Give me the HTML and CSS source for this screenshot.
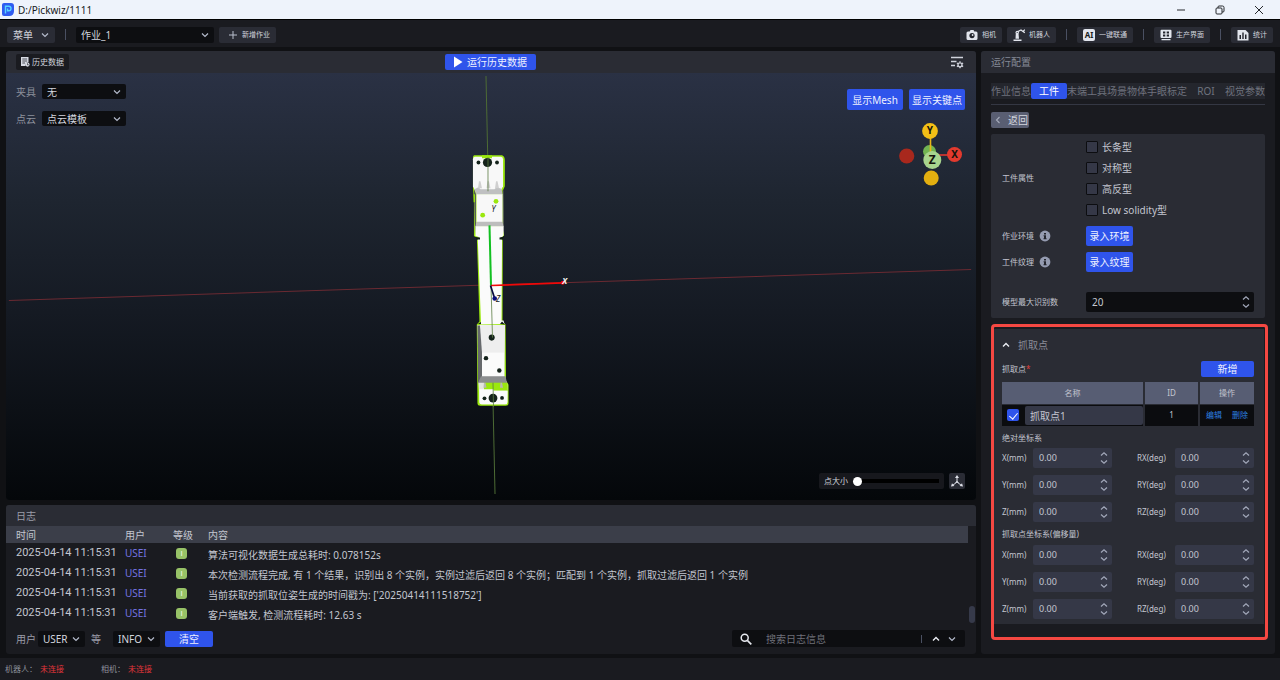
FILE: index.html
```html
<!DOCTYPE html>
<html lang="zh-CN">
<head>
<meta charset="utf-8">
<title>D:/Pickwiz/1111</title>
<link rel="stylesheet" href="styles.css">
</head>
<body>
<svg class="sprite" aria-hidden="true">
  <symbol id="down" viewBox="0 0 8 8"><path d="M1 2.5 4 5.5 7 2.5" fill="none" stroke="currentColor" stroke-width="1.2"/></symbol>
  <symbol id="up" viewBox="0 0 8 8"><path d="M1 5.5 4 2.5 7 5.5" fill="none" stroke="currentColor" stroke-width="1.4"/></symbol>
  <symbol id="spin" viewBox="0 0 8 14"><path d="M1 4.5 4 1.7 7 4.5M1 9.5 4 12.3 7 9.5" fill="none" stroke="currentColor" stroke-width="1.2"/></symbol>
  <symbol id="info" viewBox="0 0 12 12"><circle cx="6" cy="6" r="5.4" fill="#949bb0"/><path d="M5 3h2v1.4H5zM4.6 5.2H7v3h.6v1H4.5v-1H5v-2h-.4z" fill="#24262e"/></symbol>
</svg>

<header class="titlebar">
  <svg class="logo" viewBox="0 0 12 13"><path d="M2 0h7q3 0 3 3v5q0 5-5 5H2q-2 0-2-2V2q0-2 2-2z" fill="#2f5bf0"/><path d="M3.500 10.500V3.200h3.200a2.200 2.200 0 0 1 0 4.600H5.600V5.400" fill="none" stroke="#58d4ff" stroke-width="1.400"/></svg>
  <h1 class="title">D:/Pickwiz/1111</h1>
  <div class="window-buttons">
    <button aria-label="最小化"><svg viewBox="0 0 10 10"><path d="M1 5h8" /></svg></button>
    <button aria-label="还原"><svg viewBox="0 0 10 10"><rect x="1" y="3" width="6" height="6" rx="1"/><path d="M3 3V2q0-1 1-1h3.500q1.500 0 1.500 1.500V6q0 1-1 1H7"/></svg></button>
    <button aria-label="关闭"><svg viewBox="0 0 10 10"><path d="m1 1 8 8M9 1 1 9"/></svg></button>
  </div>
</header>

<nav class="toolbar">
  <button class="chip menu">菜单<svg class="chev"><use href="#down"/></svg></button>
  <i class="sep"></i>
  <span class="select job"><select aria-label="作业"><option>作业_1</option></select><svg class="chev"><use href="#down"/></svg></span>
  <button class="chip add"><svg class="ico10" viewBox="0 0 10 10"><path d="M5 1v8M1 5h8" stroke="#b9bfce" stroke-width="1" fill="none"/></svg>新增作业</button>
  <span class="grow"></span>
  <button class="chip"><svg class="ico" viewBox="0 0 12 12"><path d="M2 2.500h1.700L4.500 1h3l.8 1.500H10q1.500 0 1.500 1.500v5.500Q11.500 11 10 11H2Q.5 11 .5 9.500V4Q.5 2.500 2 2.500z" fill="#e2e5ed"/><circle cx="6" cy="6.600" r="2.600" fill="#22242c"/><circle cx="6.600" cy="6" r=".9" fill="#e2e5ed"/></svg>相机</button>
  <button class="chip"><svg class="ico" viewBox="0 0 12 12"><path d="M.5 10.500h8V12h-8zM2.500 9.800l.3-5.500h2.700l.5 5.500z" fill="#e2e5ed"/><circle cx="4.200" cy="3.500" r="1.700" fill="#e2e5ed"/><path d="m4 3 4-2 2 1.500M10 2.500 11.800.6M10 2.500l1.800 1.200" stroke="#e2e5ed" stroke-width="1.200" fill="none"/><circle cx="4.200" cy="3.500" r=".6" fill="#22242c"/></svg>机器人</button>
  <i class="sep"></i>
  <button class="chip"><span class="ai">AI</span>一键联通</button>
  <i class="sep"></i>
  <button class="chip"><svg class="ico" viewBox="0 0 12 12"><path d="M1.500.8h9q1 0 1 1V8q0 1-1 1h-9q-1 0-1-1V1.800q0-1 1-1zM1.500 10h9v1.200h-9z" fill="#e2e5ed"/><path d="M3 2.500h2.300v1.900H3zM6.700 2.500H9v1.900H6.700zM3 5.600h2.300v1.900H3zM6.700 5.600H9v1.900H6.700z" fill="#22242c"/></svg>生产界面</button>
  <i class="sep"></i>
  <button class="chip"><svg class="ico" viewBox="0 0 12 12"><path d="M1 1h7.500L11.500 4v7.500h-11V1.500z" fill="#e2e5ed"/><path d="M2.500 6H4v4H2.500zM5.300 3.500h1.400V10H5.300zM8 5.500h1.500V10H8z" fill="#22242c"/></svg>统计</button>
</nav>

<main class="workspace">
  <div class="left">
    <section class="panel viewer">
      <div class="viewer-head">
        <button class="history"><svg class="ico10" viewBox="0 0 10 10"><path d="M1 0h7.500v5.200L6 6 5.500 9H1z" fill="#d8dbe4"/><path d="M2.300 2h4.800M2.300 4h4.800M2.300 6H5" stroke="#2a2c34" stroke-width=".8"/><circle cx="7.500" cy="7.600" r="2.100" fill="#d8dbe4"/><path d="M7.500 6.300v1.500h1.200" stroke="#1a1b20" stroke-width=".7" fill="none"/></svg>历史数据</button>
        <button class="primary run"><svg class="play" viewBox="0 0 10 12"><path d="M1 .5 9.500 6 1 11.500z" fill="#fff"/></svg>运行历史数据</button>
        <button class="bare options" aria-label="显示设置"><svg viewBox="0 0 13 13"><path d="M0 1.500h12M0 5.500h5.500M0 9.500h4" stroke="#d0d3dc" stroke-width="1.300"/><circle cx="9" cy="8.800" r="2" fill="none" stroke="#d0d3dc" stroke-width="1.300"/><path d="M9 5.300v1.300M9 11v1.300M5.900 7l1.200.7M10.900 9.900l1.200.7M5.900 10.600l1.200-.7M10.900 7.700l1.200-.7" stroke="#d0d3dc" stroke-width="1.300"/></svg></button>
      </div>
      <div class="scene">
        <svg class="model" viewBox="6 73 970 426" preserveAspectRatio="xMidYMid slice" role="img" aria-label="点云">
          <path d="M10 300 970 269" stroke="#6b2a32" stroke-width="1"/>
          <path d="M486 76 495 493" stroke="#4d6b35" stroke-width="1"/>
          <path d="M474.500 155H502Q504.800 156 504.800 160V186L503 190 504 235 501.500 237.500 502.700 240 502.500 321 505.500 324 506 380 508.500 384V402.500Q508.500 405 505.500 405H480.500Q477.500 405 477.500 402.500L476.800 324 479.500 321 477 240 478 238 474 235.500V203L473 186V158Q473 155 474.500 155z" fill="#9be80e"/>
          <path d="M475 156.500h26q2 0 2 2.500v27l-3 6h-24l-3-6v-27q0-2.500 2-2.500z" fill="#f8f8f8"/>
          <path d="M482 155h10v3h-10z" fill="#9be80e"/>
          <path d="M474 189 476 194v32l-1 8z" fill="#53565b"/>
          <path d="M473.700 194h1.300v8h-1.300z" fill="#9be80e"/>
          <path d="M502.500 190l1 0 .5 44-1.500-6z" fill="#53565b"/>
          <path d="M474.500 189q2-1 4-2l2 2h14l2-2 5 1.500 1 6h-26z" fill="#bfc0c1"/>
          <path d="M479 181h1.500l1.500 7h-4zM487.500 181h1.500l1.500 7h-4zM496 181h1.500l1.500 7h-4z" fill="#d0d0d0"/>
          <path d="M476.500 194h26v28h-26z" fill="#f8f8f8"/>
          <path d="M476.500 221.500h26l1 5h-28z" fill="#bdbdbd"/>
          <path d="M475.500 226h28v9l-2.500 2.500 1 2.500-.5 80h2l1 3.500-24 .5.500-3-3.200-82 1-2.500-3.300-1z" fill="#fbfbfb"/>
          <path d="m475 236.500 5 .5v2h-3zM504.500 236l-5 1v2h3zM481 321.500v2h-3zM502 321l3 3-5-.5z" fill="#101e15"/>
          <path d="M477.500 324.500h27.500l-.5 52 3 7-.5 20h-26q-1.500 0-1.500-2z" fill="#eeeeee"/>
          <path d="m477.500 325 2.500 0 2 27v24l-4 7z" fill="#66696c"/>
          <path d="M482 352h22v24h-22z" fill="#fbfbfb"/>
          <path d="M481 375.500h24.500l1.500 7h-29z" fill="#8b8d8e"/>
          <path d="M478.500 382h5.500l1 8h-6z" fill="#e4e6df"/>
          <path d="M484 382h23.500v8H484z" fill="#9be80e"/>
          <path d="M479.500 388.500h14v1.500h14v11q0 2.500-2.500 2.500h-23q-2.500 0-2.500-2.500z" fill="#fbfbfb"/>
          <path d="M484 382l1.500 0 1 5h-3zM500.500 382h1.500l1 5h-3z" fill="#b8b8b0"/>
          <g fill="#14221a"><circle cx="487.500" cy="162.300" r="4.600"/><circle cx="478.500" cy="162.300" r="1.900"/><circle cx="497" cy="162.300" r="1.900"/><circle cx="491.700" cy="337" r="3"/><circle cx="486" cy="357.500" r="2.200"/><circle cx="499.300" cy="369.800" r="2.200"/><circle cx="493" cy="397.300" r="4.400"/><circle cx="484.500" cy="397.600" r="1.900"/><circle cx="502" cy="397.200" r="1.900"/></g>
          <circle cx="496" cy="201" r="2.400" fill="#9be80e"/><circle cx="482.700" cy="214.800" r="2.400" fill="#9be80e"/>
          <path d="M488 157v34M491 285l1.500 52M493 382l.5 24" stroke="#5d7d45" stroke-width=".8" fill="none"/>
          <path d="M489.500 225 491 285" stroke="#13c022" stroke-width="2"/>
          <path d="M491 285 563 282.300" stroke="#f00808" stroke-width="1.700"/><circle cx="562.500" cy="282.300" r="2" fill="#f00808"/>
          <path d="m490.500 285 4 12.500" stroke="#090b3c" stroke-width="1.700"/><circle cx="494.700" cy="298" r="2.300" fill="#090c78"/>
          <text class="axis" x="491.500" y="212">Y</text><text class="axis" x="496" y="301">Z</text><text class="axis light" x="562" y="284">X</text>
        </svg>
        <div class="overlay">
          <div class="pickers">
            <label class="picker">夹具<span class="select"><select><option>无</option></select><svg class="chev"><use href="#down"/></svg></span></label>
            <label class="picker">点云<span class="select"><select><option>点云模板</option></select><svg class="chev"><use href="#down"/></svg></span></label>
          </div>
          <div class="display">
            <div class="display-buttons"><button class="primary tall">显示Mesh</button><button class="primary tall">显示关键点</button></div>
            <svg class="gizmo" viewBox="899 122 66 66" role="img" aria-label="坐标轴">
              <circle cx="906.700" cy="156" r="7.600" fill="#a8281d"/><circle cx="929.500" cy="151.500" r="6.500" fill="#72b552"/>
              <path d="M930.500 131v25" stroke="#e8b516" stroke-width="1.600"/><path d="M932 155h20" stroke="#b83431" stroke-width="1.800"/>
              <circle cx="930" cy="131" r="7.900" fill="#f3bf16"/><circle cx="954.500" cy="154.500" r="7.500" fill="#e23a2e"/><circle cx="931.200" cy="178" r="7.500" fill="#e3af10"/><circle cx="932.300" cy="160" r="9" fill="#a8d58e"/>
              <text x="930" y="134">Y</text><text x="954.500" y="158">X</text><text class="z" x="932.300" y="164">Z</text>
            </svg>
          </div>
        </div>
        <div class="overlay bottom">
          <label class="size">点大小<input type="range" min="0" max="100" value="0"></label>
          <button class="chip axes" aria-label="坐标轴"><svg class="ico" viewBox="0 0 12 12"><path d="M6 2v5L1.500 10.500M6 7l4.500 3.500M4.500 7.500 6 6.500l1.500 1" stroke="#dfe2ea" fill="none" stroke-width="1"/><path d="M6 0 8 3H4zM0 11.500l1-3.300 2.400 2.800zM12 11.500l-1-3.300L8.600 11z" fill="#dfe2ea"/></svg></button>
        </div>
      </div>
    </section>

    <section class="panel log">
      <h2 class="panel-head">日志</h2>
      <div class="log-scroll">
        <table class="log-table">
          <thead><tr><th class="time">时间</th><th class="user">用户</th><th class="level">等级</th><th>内容</th></tr></thead>
          <tbody>
            <tr><td>2025-04-14 11:15:31</td><td class="user">USEI</td><td><span class="badge">I</span></td><td class="message">算法可视化数据生成总耗时: 0.078152s</td></tr>
            <tr><td>2025-04-14 11:15:31</td><td class="user">USEI</td><td><span class="badge">I</span></td><td class="message">本次检测流程完成, 有 1 个结果，识别出 8 个实例，实例过滤后返回 8 个实例；匹配到 1 个实例，抓取过滤后返回 1 个实例</td></tr>
            <tr><td>2025-04-14 11:15:31</td><td class="user">USEI</td><td><span class="badge">I</span></td><td class="message">当前获取的抓取位姿生成的时间戳为: ['20250414111518752']</td></tr>
            <tr><td>2025-04-14 11:15:31</td><td class="user">USEI</td><td><span class="badge">I</span></td><td class="message">客户端触发, 检测流程耗时: 12.63 s</td></tr>
          </tbody>
        </table>
        <span class="thumb"></span>
      </div>
      <div class="log-filter">
        <label class="who" for="log-user">用户</label>
        <span class="select short"><select id="log-user"><option>USER</option></select><svg class="chev"><use href="#down"/></svg></span>
        <label class="lvl" for="log-level">等</label>
        <span class="select short"><select id="log-level"><option>INFO</option></select><svg class="chev"><use href="#down"/></svg></span>
        <button class="primary clear">清空</button>
        <span class="grow"></span>
        <div class="search">
          <svg class="ico" viewBox="0 0 12 12"><circle cx="4.700" cy="4.700" r="3.500" fill="none" stroke="#e6e8ee" stroke-width="1.500"/><path d="m7.300 7.300 4 4" stroke="#e6e8ee" stroke-width="1.700"/></svg>
          <input type="text" placeholder="搜索日志信息" aria-label="搜索日志信息">
          <i class="sep small"></i>
          <button class="bare bright" aria-label="上一个"><svg class="chev"><use href="#up"/></svg></button>
          <button class="bare" aria-label="下一个"><svg class="chev"><use href="#down"/></svg></button>
        </div>
      </div>
    </section>
  </div>

  <aside class="panel config">
    <h2 class="panel-head">运行配置</h2>
    <div class="config-body">
      <div class="tabs">
        <button>作业信息</button><button class="active">工件</button><button>末端工具</button><button>场景物体</button><button>手眼标定</button><button class="roi">ROI</button><button>视觉参数</button>
      </div>
      <button class="back"><svg class="ico8" viewBox="0 0 8 8"><path d="M5.500 1 2.500 4l3 3" fill="none" stroke="#a5abbb" stroke-width="1.100"/></svg>返回</button>
      <section class="card props">
        <span>工件属性</span>
        <div class="checks">
          <label><input type="checkbox">长条型</label>
          <label><input type="checkbox">对称型</label>
          <label><input type="checkbox">高反型</label>
          <label><input type="checkbox">Low solidity型</label>
        </div>
        <span class="with-info">作业环境<svg class="ico"><use href="#info"/></svg></span>
        <button class="primary enter">录入环境</button>
        <span class="with-info">工件纹理<svg class="ico"><use href="#info"/></svg></span>
        <button class="primary enter">录入纹理</button>
        <label class="max" for="max">模型最大识别数</label>
        <span class="number dark max"><input id="max" type="number" value="20"><svg><use href="#spin"/></svg></span>
      </section>

      <section class="grasp">
        <div class="grasp-body">
          <h3 class="grasp-title"><svg class="chev"><use href="#up"/></svg>抓取点</h3>
          <div class="grasp-add"><span>抓取点<b>*</b></span><button class="primary">新增</button></div>
          <table class="points">
            <thead><tr><th>名称</th><th class="c-id">ID</th><th class="c-op">操作</th></tr></thead>
            <tbody><tr>
              <td><div class="name"><input type="checkbox" checked aria-label="启用抓取点1"><input type="text" value="抓取点1" aria-label="名称"></div></td>
              <td>1</td>
              <td><div class="ops"><a href="#edit">编辑</a><a href="#delete">删除</a></div></td>
            </tr></tbody>
          </table>
          <h4>绝对坐标系</h4>
          <div class="coords">
            <label for="ax">X(mm)</label><span class="number"><input id="ax" type="number" step="0.01" value="0.00"><svg><use href="#spin"/></svg></span>
            <label class="rot" for="arx">RX(deg)</label><span class="number"><input id="arx" type="number" step="0.01" value="0.00"><svg><use href="#spin"/></svg></span>
            <label for="ay">Y(mm)</label><span class="number"><input id="ay" type="number" step="0.01" value="0.00"><svg><use href="#spin"/></svg></span>
            <label class="rot" for="ary">RY(deg)</label><span class="number"><input id="ary" type="number" step="0.01" value="0.00"><svg><use href="#spin"/></svg></span>
            <label for="az">Z(mm)</label><span class="number"><input id="az" type="number" step="0.01" value="0.00"><svg><use href="#spin"/></svg></span>
            <label class="rot" for="arz">RZ(deg)</label><span class="number"><input id="arz" type="number" step="0.01" value="0.00"><svg><use href="#spin"/></svg></span>
          </div>
          <h4>抓取点坐标系(偏移量)</h4>
          <div class="coords">
            <label for="ox">X(mm)</label><span class="number"><input id="ox" type="number" step="0.01" value="0.00"><svg><use href="#spin"/></svg></span>
            <label class="rot" for="orx">RX(deg)</label><span class="number"><input id="orx" type="number" step="0.01" value="0.00"><svg><use href="#spin"/></svg></span>
            <label for="oy">Y(mm)</label><span class="number"><input id="oy" type="number" step="0.01" value="0.00"><svg><use href="#spin"/></svg></span>
            <label class="rot" for="ory">RY(deg)</label><span class="number"><input id="ory" type="number" step="0.01" value="0.00"><svg><use href="#spin"/></svg></span>
            <label for="oz">Z(mm)</label><span class="number"><input id="oz" type="number" step="0.01" value="0.00"><svg><use href="#spin"/></svg></span>
            <label class="rot" for="orz">RZ(deg)</label><span class="number"><input id="orz" type="number" step="0.01" value="0.00"><svg><use href="#spin"/></svg></span>
          </div>
        </div>
      </section>
    </div>
  </aside>
</main>

<footer class="status">
  <span>机器人：<b>未连接</b></span>
  <span>相机：<b>未连接</b></span>
</footer>
</body>
</html>
```
FILE: styles.css
```css
* { box-sizing: border-box; }
html, body { height: 100%; margin: 0; }
body {
  display: flex;
  flex-direction: column;
  background: #101114;
  color: #c3c6d0;
  font: 10px/16px "Noto Sans", "Noto Sans CJK SC", sans-serif;
  overflow: hidden;
}
button, input, select { font: inherit; color: inherit; margin: 0; padding: 0; border: 0; background: none; }
button, label, th { white-space: nowrap; }
h1, h2, h3, h4 { margin: 0; font-size: 10px; font-weight: 400; }
svg { flex: none; display: block; }
b { font-weight: 400; }
.sprite { position: absolute; width: 0; height: 0; }
.grow { flex: 1; }
.chev, .ico8 { width: 8px; height: 8px; color: #b4bacb; }
.ico { width: 12px; height: 12px; }
.ico10 { width: 10px; height: 10px; }

.titlebar { display: flex; align-items: center; flex: none; height: 20px; padding: 0 16px 0 2px; background: #eef3fb; border-bottom: 1px solid #000; color: #16181c; }
.logo { width: 12px; height: 13px; margin-right: 4px; }
.title { flex: 1; }
.window-buttons { display: flex; gap: 29px; }
.window-buttons button { width: 10px; height: 10px; }
.window-buttons svg { width: 10px; height: 10px; fill: none; stroke: #26282c; stroke-width: 1; }

.toolbar { display: flex; align-items: center; gap: 5px; flex: none; height: 27px; padding: 2px 7px 0; background: #1a1b20; }
.chip { display: flex; align-items: center; gap: 4px; height: 16px; padding: 0 6px; border-radius: 2px; background: #2a2c35; font-size: 7px; color: #d0d3dc; }
.menu { font-size: 10px; gap: 8px; }
.add { padding: 0 6px 0 9px; }
.sep { width: 1px; height: 11px; margin: 0 5px; background: #4a5062; }
.job { width: 138px; }
.ai { width: 12px; height: 12px; border-radius: 2px; background: #e2e5ed; color: #1a1b20; font-size: 8px; font-weight: 700; line-height: 12px; text-align: center; }

.select { position: relative; display: block; height: 15px; border-radius: 2px; background: #0d0e11; color: #d3d6df; }
.toolbar .select { height: 16px; }
.select select { display: block; appearance: none; width: 100%; height: 100%; padding: 0 16px 0 5px; outline: 0; }
.select .chev { position: absolute; right: 5px; top: 4px; pointer-events: none; }

.workspace { display: grid; grid-template-columns: minmax(0, 1fr) 294px; gap: 5px; flex: 1; min-height: 0; padding: 4px 5px 4px 6px; }
.left { display: flex; flex-direction: column; gap: 5px; min-height: 0; }
.panel { border-radius: 3px; background: #1a1b20; overflow: hidden; }
.panel-head { height: 22px; padding: 0 10px; line-height: 22px; background: #2a2c34; color: #9a9da8; }

.viewer { flex: 1; display: flex; flex-direction: column; min-height: 0; }
.viewer-head { display: grid; grid-template-columns: 1fr auto 1fr; align-items: center; height: 22px; padding: 0 12px 0 10px; background: #2a2c34; }
.history { display: flex; align-items: center; justify-self: start; gap: 2px; height: 16px; padding: 0 5px 0 4px; border-radius: 2px; background: #1a1b20; color: #d0d3dc; font-size: 8px; }
.primary { display: flex; align-items: center; justify-content: center; height: 16px; border-radius: 2px; background: #2f54eb; color: #eef1ff; }
.run { width: 91px; gap: 4px; }
.play { width: 10px; height: 12px; }
.options { justify-self: end; }
.options svg { width: 13px; height: 13px; }
.bare { display: flex; align-items: center; }
.bright .chev { color: #eceef4; }

.scene { position: relative; flex: 1; display: flex; flex-direction: column; justify-content: space-between; min-height: 0; background: linear-gradient(#2a3144, #1e2530 30%, #151a23 56%, #04070a); }
.model { position: absolute; inset: 0; width: 100%; height: 100%; }
.axis { font: italic 8px "Noto Sans", sans-serif; fill: #15171c; }
.axis.light { fill: #f4f4f4; font-weight: 700; }
.overlay { position: relative; display: flex; justify-content: space-between; padding: 11px 11px 0 10px; }
.pickers { display: flex; flex-direction: column; gap: 12px; }
.picker { display: flex; align-items: center; gap: 6px; height: 15px; color: #8d919c; }
.picker .select { width: 84px; }
.display { display: flex; flex-direction: column; align-items: flex-end; gap: 12px; padding-top: 5px; }
.display-buttons { display: flex; gap: 6px; }
.tall { width: 56px; height: 21px; }
.gizmo { width: 66px; height: 66px; }
.gizmo text { font: 700 10px "Noto Sans", sans-serif; fill: #16140c; text-anchor: middle; }
.gizmo .z { font-size: 12px; }
.bottom { justify-content: flex-end; gap: 5px; padding: 0 11px 11px; }
.size { display: flex; align-items: center; gap: 5px; width: 125px; height: 16px; padding: 0 5px; border-radius: 2px; background: #17181d; font-size: 8px; color: #d0d3dc; }
.size input { appearance: none; flex: 1; min-width: 0; height: 10px; outline: 0; background: linear-gradient(#000, #000) center / 100% 4px no-repeat; }
.size input::-webkit-slider-thumb { appearance: none; width: 9px; height: 9px; border-radius: 50%; background: #fff; }
.axes { padding: 0 2px; }

.log { flex: none; }
.log .panel-head { height: 21px; }
.log-scroll { position: relative; padding-right: 8px; }
.thumb { position: absolute; right: 1px; bottom: 0; width: 6px; height: 17px; border-radius: 3px; background: #363a4a; }
.log-table { width: 100%; table-layout: fixed; border-collapse: collapse; color: #c3c6d0; }
.log-table th { height: 17px; padding: 0; background: #3b3e49; font-weight: 400; line-height: 16px; text-align: left; }
.log-table td { height: 20px; padding: 0; line-height: 16px; vertical-align: middle; white-space: nowrap; }
.log-table .time { width: 119px; padding-left: 10px; }
.log-table td:first-child { padding-left: 10px; font-family: Roboto, sans-serif; font-size: 11px; }
.log-table th.user { width: 48px; }
.log-table td.user { color: #7473e0; }
.log-table .level { width: 35px; }
.log-table td.message { padding-top: 4px; }
.badge { display: block; width: 11px; height: 11px; margin-left: 3px; border-radius: 3px; background: #97c267; color: #f3f8ec; font-family: "Liberation Sans", sans-serif; font-size: 8px; line-height: 11px; text-align: center; }
.log-filter { display: flex; align-items: center; height: 31px; padding: 0 11px 0 10px; }
.who { width: 20px; margin-right: 2px; color: #9a9da8; }
.lvl { width: 10px; margin: 0 12px 0 6px; color: #9a9da8; }
.log-filter .select { height: 16px; }
.short { width: 47px; }
.short select { padding-right: 12px; }
.clear { width: 48px; margin-left: 5px; }
.search { display: flex; align-items: center; gap: 8px; width: 233px; height: 17px; padding: 0 9px 0 8px; border-radius: 2px; background: #0d0e11; }
.search input { flex: 1; min-width: 0; padding-left: 6px; outline: 0; }
.search input::placeholder { color: #6d7079; opacity: 1; }
.small { height: 8px; margin: 0 2px 0 0; }

.config { display: flex; flex-direction: column; }
.config .panel-head { flex: none; color: #858996; }
.config-body { display: flex; flex-direction: column; align-items: stretch; padding: 10px 10px 0; }
.tabs { display: flex; justify-content: space-between; padding-bottom: 5px; border-bottom: 1px solid #343743; }
.tabs button { height: 16px; background: #24262d; color: #6f727d; }
.tabs .active { width: 36px; border-radius: 2px; background: #2f54eb; color: #fff; }
.tabs .roi { flex: 1; }
.back { display: flex; align-items: center; align-self: flex-start; gap: 6px; height: 16px; margin: 7px 0 6px; padding: 0 1px 0 3px; border-radius: 2px; background: #595e72; color: #d3d6df; }
.card { border-radius: 2px; background: #2a2c34; }
.props { display: grid; grid-template-columns: 84px 1fr; align-items: center; row-gap: 6px; padding: 2px 11px 6px; font-size: 8px; }
.checks { display: grid; font-size: 10px; }
.checks label { display: flex; align-items: center; gap: 4px; height: 21px; }
input[type="checkbox"] { appearance: none; flex: none; width: 12px; height: 12px; border: 1px solid #0c0d10; border-radius: 1px; background: #353847; }
.with-info { display: flex; align-items: center; gap: 5px; }
.enter { width: 47px; height: 20px; font-size: 10px; }
.max { margin-top: 14px; }
.number { position: relative; display: block; height: 20px; border-radius: 2px; background: #353847; font-size: 9px; }
.number.dark { background: #0d0e11; font-size: 10px; }
.number input { display: block; appearance: textfield; width: 100%; height: 100%; padding: 0 16px 0 6px; outline: 0; }
.number input::-webkit-inner-spin-button { appearance: none; margin: 0; }
.number svg { position: absolute; right: 4px; top: 3px; width: 8px; height: 14px; color: #a2a8ba; pointer-events: none; }

.grasp { margin: 6px -3px 0 0; padding: 2px 1px 13px 0; border: 3px solid #f54842; border-radius: 4px; }
.grasp-body { padding: 8px 10px 5px 8px; background: #2a2c34; font-size: 8px; }
.grasp-title { display: flex; align-items: center; gap: 8px; height: 16px; color: #8a8d98; }
.grasp-title .chev { color: #eceef4; }
.grasp-add { display: flex; justify-content: space-between; align-items: center; margin: 8px 0 5px; }
.grasp-add b { color: #e0403c; }
.grasp-add .primary { width: 53px; font-size: 10px; }
.points { width: 100%; table-layout: fixed; border-collapse: collapse; text-align: center; }
.points th { height: 22px; padding: 0; background: #575d73; font-weight: 400; }
.points td { height: 22px; padding: 0; background: #0b0c0f; }
.points th + th, .points td + td { border-left: 2px solid #2a2c34; }
.points tr > * { border-bottom: 1px solid #2a2c34; }
.points .c-id, .points .c-op { width: 55px; }
.name { display: flex; align-items: center; gap: 6px; padding-left: 5px; }
.name input[type="text"] { flex: 1; min-width: 0; height: 19px; padding: 0 5px; border-radius: 2px; background: #353847; font-size: 10px; }
.name input[type="checkbox"] { border: 0; border-radius: 2px; background: #2f54eb; position: relative; }
.name input[type="checkbox"]::after { content: ""; position: absolute; left: 4px; top: 2px; width: 4px; height: 7px; border: solid #fff; border-width: 0 1px 1px 0; transform: rotate(40deg); }
.ops { display: flex; justify-content: space-around; padding: 0 1px; }
.ops a { color: #2b7fe0; text-decoration: none; }
.grasp h4 { height: 16px; margin: 3px 0 2px; font-size: 8px; line-height: 16px; }
.grasp .coords + h4 { margin: 4px 0 3px; }
.coords { display: grid; grid-template-columns: 31px 1fr 63px 1fr; row-gap: 7px; align-items: center; }
.rot { padding-left: 25px; }

.status { display: flex; align-items: center; flex: none; gap: 37px; height: 22px; padding: 0 5px; background: #1a1b20; color: #8d919c; font-size: 8px; }
.status b { margin-left: 3px; color: #e0353a; }
```
